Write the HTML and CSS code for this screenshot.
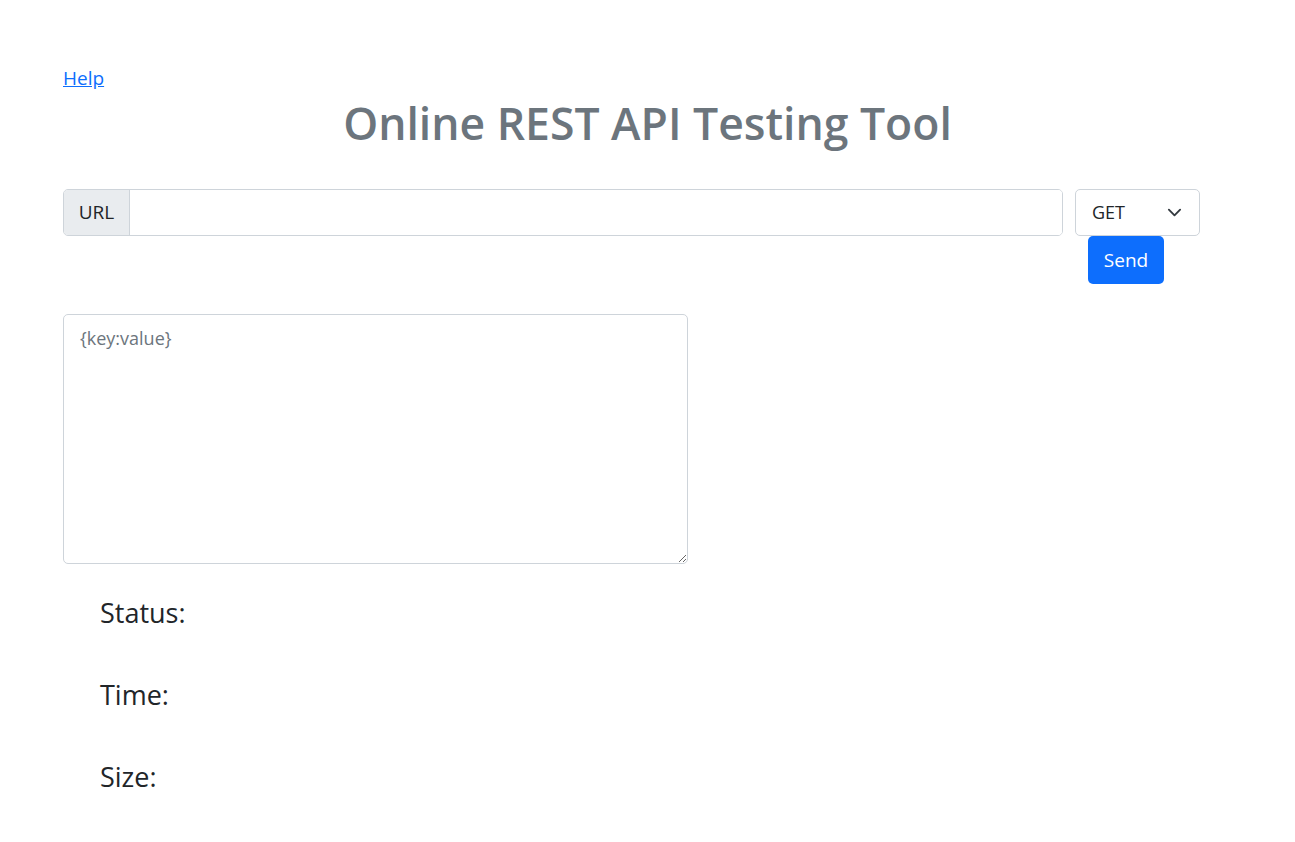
FILE: index.html
```html
<!DOCTYPE html>
<html lang="en">
<head>
<meta charset="utf-8">
<title>Online REST API Testing Tool</title>
<link rel="stylesheet" href="styles.css">
</head>
<body>
<div class="page">
  <div class="help"><a href="#">Help</a></div>
  <h1 class="title">Online REST API Testing Tool</h1>
  <div class="request">
    <div class="input-group">
      <span class="addon">URL</span>
      <input class="url" type="text">
    </div>
    <div class="method-col">
      <div class="select">
        <span>GET</span>
        <svg class="chev" width="15" height="15" viewBox="0 0 16 16"><path d="M2 5l6 6 6-6" fill="none" stroke="#343a40" stroke-width="2" stroke-linecap="round" stroke-linejoin="round"/></svg>
      </div>
      <button class="send">Send</button>
    </div>
  </div>
  <textarea class="body-input" placeholder="{key:value}"></textarea>
  <div class="stats">
    <div class="stat">Status:</div>
    <div class="stat">Time:</div>
    <div class="stat">Size:</div>
  </div>
</div>
</body>
</html>
```
FILE: styles.css
```css
* { box-sizing: border-box; }
body {
  margin: 0;
  background: #fff;
  color: #212529;
  font-family: "Open Sans", "Noto Sans", sans-serif;
  font-size: 16px;
  line-height: 1.5;
}
.page {
  padding: 64px 95px 0 63px;
}
.help {
  font-size: 19px;
  line-height: 28px;
}
.help a {
  color: #0d6efd;
  text-decoration: underline;
}
.title {
  margin: 5px 0 0;
  font-size: 44.5px;
  line-height: 52px;
  font-weight: 600;
  color: #6c757d;
  text-align: center;
  padding-left: 32px;
}
.request {
  margin-top: 40px;
  display: flex;
  gap: 12px;
  align-items: flex-start;
}
.input-group {
  width: 1000px;
  height: 47px;
  display: flex;
  border: 1px solid #ced4da;
  border-radius: 5px;
  overflow: hidden;
}
.addon {
  width: 66px;
  background: #e9ecef;
  border-right: 1px solid #ced4da;
  font-size: 19px;
  display: flex;
  align-items: center;
  justify-content: center;
}
.url {
  flex: 1;
  border: 0;
  outline: none;
  font: inherit;
  font-size: 19px;
  padding: 0 16px;
}
.method-col {
  display: flex;
  flex-direction: column;
}
.select {
  width: 125px;
  height: 47px;
  border: 1px solid #ced4da;
  border-radius: 5px;
  display: flex;
  align-items: center;
  justify-content: space-between;
  padding: 0 17px 0 16px;
  font-size: 18px;
}
.chev { display: block; }
.send {
  align-self: flex-start;
  margin-left: 13px;
  width: 76px;
  height: 48px;
  background: #0d6efd;
  color: #fff;
  border: 0;
  border-radius: 5px;
  font-family: inherit;
  font-size: 19px;
}
.body-input {
  display: block;
  margin-top: 30px;
  width: 625px;
  height: 250px;
  border: 1px solid #ced4da;
  border-radius: 5px;
  padding: 10px 16px;
  font-family: inherit;
  font-size: 18px;
  line-height: 1.5;
  color: #212529;
  resize: vertical;
  outline: none;
}
.body-input::placeholder { color: #6c757d; }
.stats {
  padding-left: 37px;
  padding-top: 31px;
}
.stat {
  font-size: 27px;
  line-height: 35px;
  margin-bottom: 47px;
}
```
